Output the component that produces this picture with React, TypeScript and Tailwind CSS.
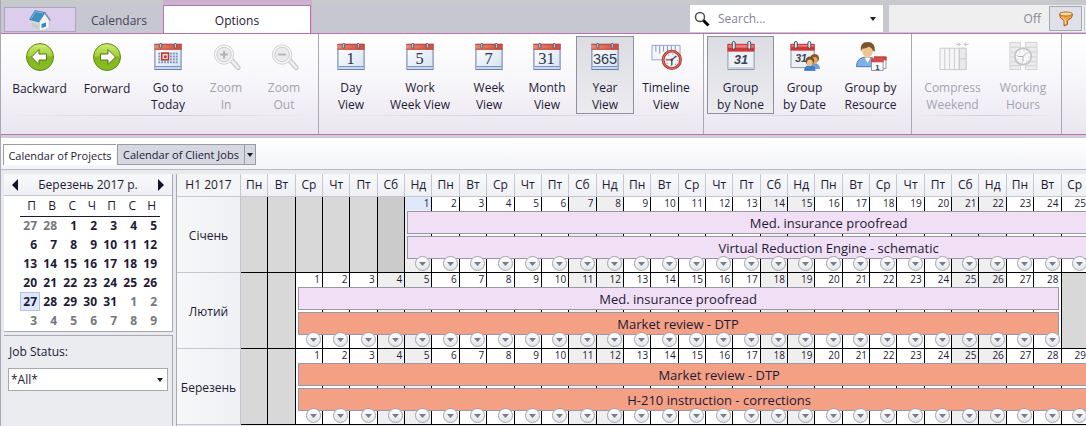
import type { ReactNode } from 'react';

const weekDays = ['Пн', 'Вт', 'Ср', 'Чт', 'Пт', 'Сб', 'Нд'];
const columns = Array.from({ length: 31 }, (_, i) => i);

const months = [
  {
    name: 'Січень',
    start: 6,
    days: 31,
    today: 1,
    jobs: [
      { title: 'Med. insurance proofread', color: 'bg-[#f1dff6]' },
      { title: 'Virtual Reduction Engine - schematic', color: 'bg-[#f1dff6]' },
    ],
  },
  {
    name: 'Лютий',
    start: 2,
    days: 28,
    today: 0,
    jobs: [
      { title: 'Med. insurance proofread', color: 'bg-[#f1dff6]' },
      { title: 'Market review - DTP', color: 'bg-[#f4a085]' },
    ],
  },
  {
    name: 'Березень',
    start: 2,
    days: 31,
    today: 0,
    jobs: [
      { title: 'Market review - DTP', color: 'bg-[#f4a085]' },
      { title: 'H-210 instruction - corrections', color: 'bg-[#f4a085]' },
    ],
  },
];

const pickerWeeks = [
  [27, 28, 1, 2, 3, 4, 5],
  [6, 7, 8, 9, 10, 11, 12],
  [13, 14, 15, 16, 17, 18, 19],
  [20, 21, 22, 23, 24, 25, 26],
  [27, 28, 29, 30, 31, 1, 2],
  [3, 4, 5, 6, 7, 8, 9],
];

function isOtherMonth(week: number, day: number) {
  return (week === 0 && day > 20) || (week >= 4 && day < 20);
}

/* ---------- icons ---------- */

function ArrowIcon({ flip = false }: { flip?: boolean }) {
  return (
    <svg viewBox="0 0 32 32" className={flip ? 'size-8 -scale-x-100' : 'size-8'}>
      <defs>
        <linearGradient id="green" x1="0" y1="0" x2="0" y2="1">
          <stop offset="0" stopColor="#cdea72" />
          <stop offset="0.45" stopColor="#a3d13a" />
          <stop offset="0.5" stopColor="#86b820" />
          <stop offset="1" stopColor="#86bd22" />
        </linearGradient>
      </defs>
      <circle cx="16" cy="17" r="13.5" fill="url(#green)" stroke="#5d8a17" />
      <path d="M7.5 17 15 9.5V14h7.500v6H15v4.500z" fill="#fff" stroke="#55721f" strokeWidth="1" />
    </svg>
  );
}

function CalendarFrame({ children }: { children?: ReactNode }) {
  return (
    <svg viewBox="0 0 32 32" className="size-8">
      <defs>
        <linearGradient id="page" x1="0" y1="0" x2="1" y2="1">
          <stop offset="0" stopColor="#ffffff" />
          <stop offset="1" stopColor="#d6e2ef" />
        </linearGradient>
        <linearGradient id="head" x1="0" y1="0" x2="1" y2="0">
          <stop offset="0" stopColor="#e88a72" />
          <stop offset="1" stopColor="#d14a3a" />
        </linearGradient>
      </defs>
      <rect x="2.500" y="4.500" width="27" height="26" fill="url(#page)" stroke="#6474a8" />
      <rect x="3" y="27" width="26" height="1" fill="#6d83b8" />
      <rect x="3" y="28" width="26" height="2" fill="#c2d9ee" />
      <rect x="2" y="4" width="28" height="6" fill="url(#head)" />
      <rect x="2" y="4" width="28" height="1" fill="#b9463a" />
      <rect x="2" y="9" width="28" height="1" fill="#c4493c" />
      {[8, 23].map((x) => (
        <rect key={x} x={x - 0.5} y="3.500" width="2" height="5" rx="1" fill="#e7eaf0" stroke="#4b5268" />
      ))}
      {children}
    </svg>
  );
}

function NumberCalendar({ value }: { value: string }) {
  return (
    <CalendarFrame>
      {value.length === 3 ? (
        <text x="16" y="25" textAnchor="middle" fontFamily="Liberation Sans" fontSize="15" fill="#333a52">{value}</text>
      ) : (
        <text x="15.500" y="25" textAnchor="middle" fontFamily="Liberation Serif" fontSize="17" fill="#2c3248">{value}</text>
      )}
    </CalendarFrame>
  );
}

function TodayIcon() {
  return (
    <CalendarFrame>
      {[13, 16, 19, 22].map((y) =>
        [6, 9, 12, 15, 18, 21, 24].map((x) => <rect key={`${x}-${y}`} x={x} y={y} width="2" height="2" fill="#7f93c4" />)
      )}
      <rect x="9.500" y="13.500" width="7" height="7" fill="#f6d5cd" stroke="#b6352c" strokeWidth="1.500" />
      <rect x="12" y="16" width="2.500" height="2.500" fill="#b6352c" />
    </CalendarFrame>
  );
}

function ZoomIcon({ plus = false }: { plus?: boolean }) {
  return (
    <svg viewBox="0 0 32 32" className="size-8">
      <path d="m21 20 7.500 8.500" stroke="#c3c3c6" strokeWidth="5" strokeLinecap="round" />
      <path d="m21 20 7.500 8.500" stroke="#efeff1" strokeWidth="3" strokeLinecap="round" />
      <circle cx="14" cy="15" r="10" fill="#f7f7f8" stroke="#cfcfd2" />
      <circle cx="14" cy="15" r="7.500" fill="#ebebed" stroke="#cacacd" />
      <path d={plus ? 'M10 15h8M14 11v8' : 'M10 15h8'} stroke="#b3b3b6" strokeWidth="2" />
    </svg>
  );
}

function TimelineIcon() {
  return (
    <svg viewBox="0 0 32 32" className="size-8">
      <path d="M1.500 5.500h29v15h-29z" fill="#f3f7fc" stroke="#8ea3c8" />
      <path d="M5.500 6v6M9.500 6v8M13.500 6v6M17.500 6v8M21.500 6v6M25.500 6v6" stroke="#8291b8" />
      <circle cx="22" cy="20.500" r="9" fill="#eef4fa" stroke="#b9352d" strokeWidth="3" />
      <circle cx="22" cy="20.500" r="9" fill="none" stroke="#e4796c" strokeWidth="1" />
      <circle cx="22" cy="20.500" r="6" fill="none" stroke="#66708c" strokeWidth="1" strokeDasharray="1 3.700" />
      <path d="m22 20.500 4.500-4M22 20.500V26" stroke="#39415c" strokeWidth="1.300" />
      <path d="M16 20.500h6" stroke="#c23b33" strokeWidth="1.300" />
      <circle cx="22" cy="20.500" r="1.300" fill="#39415c" />
    </svg>
  );
}

function RedCalendar() {
  return (
    <svg viewBox="0 0 32 32" className="size-8">
      <path d="M2.500 4.500h27v26h-27z" fill="#edf1f6" stroke="#8993a8" />
      <path d="M3 28h26v2H3z" fill="#c5d0de" />
      <path d="M2 4h28v8H2z" fill="#cf3636" />
      <path d="M3 5h26v3H3z" fill="#ec7a76" />
      {[8, 24].map((x) => (
        <rect key={x} x={x - 1} y="1.500" width="3" height="8" rx="1.500" fill="#e5e8ee" stroke="#454a5a" />
      ))}
      <text x="16" y="25" textAnchor="middle" fontFamily="Liberation Sans" fontSize="13" fontWeight="bold" fontStyle="italic" fill="#3c4356">31</text>
    </svg>
  );
}

function GroupDateIcon() {
  return (
    <svg viewBox="0 0 32 32" className="size-8">
      <path d="M1.500 4.500h24v24h-24z" fill="#edf1f6" stroke="#8993a8" />
      <path d="M1 4h25v7H1z" fill="#cf3636" />
      <path d="M2 5h23v2H2z" fill="#ec7a76" />
      {[6, 20].map((x) => (
        <rect key={x} x={x - 1} y="1.500" width="3" height="7" rx="1.500" fill="#e5e8ee" stroke="#454a5a" />
      ))}
      <text x="12" y="23" textAnchor="middle" fontFamily="Liberation Sans" fontSize="11" fontWeight="bold" fontStyle="italic" fill="#3c4356">31</text>
      <path d="M21 30q0-6 5-6t5.500 6z" fill="#6fa0dc" />
      <circle cx="26" cy="19" r="4.500" fill="#8a5a28" />
      <ellipse cx="26" cy="21" rx="3" ry="3.500" fill="#e0a868" />
      <path d="M15.500 31.500q0-5 5.500-5t5.500 5z" fill="#3f7fcf" stroke="#2c60a5" strokeWidth="0.600" />
      <circle cx="21" cy="21.500" r="4.500" fill="#7b4f22" />
      <ellipse cx="21" cy="23.500" rx="3" ry="3.500" fill="#eec08a" />
    </svg>
  );
}

function GroupResourceIcon() {
  return (
    <svg viewBox="0 0 32 32" className="size-8">
      <path d="M1 27.500q0-10 11-10t11 10z" fill="#7fb0e8" stroke="#4577b8" />
      <path d="m9.500 18 3 6 3-6z" fill="#fff" />
      <ellipse cx="12.500" cy="11" rx="5.500" ry="7" fill="#f1c592" />
      <path d="M5.500 12Q4 2 12.500 2t7.500 10l-2-1q-1-3-4-4-4 2-7 2z" fill="#80542a" />
      <path d="M19.500 17.500h12v12h-12z" fill="#fff" stroke="#8a93a8" />
      <path d="M19 17h13v4H19z" fill="#d23b39" />
      <path d="M16.500 19.500h12v12h-12z" fill="#f8fafc" stroke="#8a93a8" />
      <path d="M16 19h13v4H16z" fill="#d94a45" />
      <text x="22.500" y="30.500" textAnchor="middle" fontFamily="Liberation Sans" fontSize="8" fontWeight="bold" fill="#39415c">1</text>
    </svg>
  );
}

function CompressIcon() {
  return (
    <svg viewBox="0 0 32 32" className="size-8" fill="none" stroke="#cacacd">
      <path d="M19 4.500h4m-1.500-2 2 2-2 2M32 4.500h-4m1.500-2-2 2 2 2" stroke="#bdbdc1" />
      <path d="M2.500 8.500h27v22h-27z" fill="#f6f6f7" />
      <path d="M22.500 8.500h7v22h-7z" fill="#e9e9eb" />
      <path d="M7.500 9v21M12.500 9v21M17.500 9v21M22.500 9v21M22.500 19.500h7" />
    </svg>
  );
}

function WorkingHoursIcon() {
  return (
    <svg viewBox="0 0 32 32" className="size-8" fill="none" stroke="#d3d3d6">
      <path d="M2.500 2.500h11v28h-11zM18.500 2.500h12v28h-12z" fill="#ececee" />
      <path d="M3 7.500h10M3 12.500h10M3 17.500h10M3 22.500h10M3 26.500h10M19 7.500h11M19 12.500h11M19 17.500h11M19 22.500h11M19 26.500h11" />
      <circle cx="16" cy="17" r="8.500" fill="#f7f7f8" stroke="#c6c6c9" strokeWidth="2" />
      <circle cx="16" cy="17" r="6" strokeDasharray="1 3.700" stroke="#b5b5b9" />
      <path d="m16 17 4-4M16 17v5M11 17h5" stroke="#aeaeb2" />
    </svg>
  );
}

function HouseIcon() {
  return (
    <svg viewBox="0 0 22 22" className="size-[22px]">
      <path d="m9 12 7-8 4 7v8l-9 3z" fill="#f4f4f4" stroke="#b9bcc0" strokeWidth="0.500" />
      <path d="M2 11v7l9 4v-9z" fill="#d3d5d8" />
      <path d="M4 14v4M6 15v4M8 16v4" stroke="#b4b6ba" strokeWidth="0.700" />
      <path d="M.5 10.500 6 1.500l10 2-6 9.500z" fill="#3f8fc0" stroke="#2f759f" strokeWidth="0.600" />
      <path d="m2 10 4.500-7.500L14 4" fill="none" stroke="#79bcdf" strokeWidth="1" />
      <path d="m15.500 3.500 6 8" stroke="#6c93ad" strokeWidth="1.500" />
      <path d="M12.500 15 17 13.500v4L12.500 19z" fill="#2f86b8" />
    </svg>
  );
}

function FunnelIcon() {
  return (
    <svg viewBox="0 0 16 16" className="size-4">
      <path d="M1.500 3.500q0 4 4.500 6v5.500l3.500-1.500v-4q5-2 5-6z" fill="#f0a340" stroke="#a8632a" />
      <ellipse cx="8" cy="3" rx="6.500" ry="2" fill="#fbd79b" stroke="#b06a2c" />
      <path d="M4.500 6.500q1 2 2.800 2.500V13" fill="none" stroke="#fde3b3" />
    </svg>
  );
}

function SearchIcon() {
  return (
    <svg viewBox="0 0 16 16" className="size-4">
      <circle cx="6" cy="6" r="4.500" fill="#fff" stroke="#4d4d4d" strokeWidth="1.500" />
      <path d="m9.500 9.500 5 5" stroke="#000" strokeWidth="3" />
    </svg>
  );
}

function Caret() {
  return (
    <svg viewBox="0 0 6 4" className="h-1 w-1.5" fill="#1c1a30">
      <path d="M0 0h6L3 4z" />
    </svg>
  );
}

/* ---------- ribbon ---------- */

type Tool = { lines: string[]; icon: ReactNode; width: string; active?: boolean; disabled?: boolean };

const ribbon: Tool[][] = [
  [
    { lines: ['Backward'], icon: <ArrowIcon />, width: 'w-[71px]' },
    { lines: ['Forward'], icon: <ArrowIcon flip />, width: 'w-16' },
    { lines: ['Go to', 'Today'], icon: <TodayIcon />, width: 'w-[58px]' },
    { lines: ['Zoom', 'In'], icon: <ZoomIcon plus />, width: 'w-[58px]', disabled: true },
    { lines: ['Zoom', 'Out'], icon: <ZoomIcon />, width: 'w-[58px]', disabled: true },
  ],
  [
    { lines: ['Day', 'View'], icon: <NumberCalendar value="1" />, width: 'w-[58px]' },
    { lines: ['Work', 'Week View'], icon: <NumberCalendar value="5" />, width: 'w-20' },
    { lines: ['Week', 'View'], icon: <NumberCalendar value="7" />, width: 'w-[58px]' },
    { lines: ['Month', 'View'], icon: <NumberCalendar value="31" />, width: 'w-[58px]' },
    { lines: ['Year', 'View'], icon: <NumberCalendar value="365" />, width: 'w-[58px]', active: true },
    { lines: ['Timeline', 'View'], icon: <TimelineIcon />, width: 'w-16' },
  ],
  [
    { lines: ['Group', 'by None'], icon: <RedCalendar />, width: 'w-[67px]', active: true },
    { lines: ['Group', 'by Date'], icon: <GroupDateIcon />, width: 'w-[61px]' },
    { lines: ['Group by', 'Resource'], icon: <GroupResourceIcon />, width: 'w-[71px]' },
  ],
  [
    { lines: ['Compress', 'Weekend'], icon: <CompressIcon />, width: 'w-[75px]', disabled: true },
    { lines: ['Working', 'Hours'], icon: <WorkingHoursIcon />, width: 'w-[66px]', disabled: true },
  ],
];

function Ribbon() {
  return (
    <div className="flex h-[102px] border-y border-[#bd6fb8] bg-linear-to-b from-white via-[#f6f5f9] to-[#eae6ef]">
      {ribbon.map((group, i) => (
        <div key={i} className="flex shrink-0 flex-col border-r border-[#a9a9b4] pt-0.5 pr-[5px] pl-[3px]">
          <div className="flex">
            {group.map((tool) => (
              <button
                key={tool.lines.join(' ')}
                type="button"
                disabled={tool.disabled}
                className={`flex h-[78px] shrink-0 flex-col items-center border pt-[3px] leading-[17px] whitespace-nowrap ${tool.width} ${
                  tool.active ? 'border-[#8e8f9f] bg-linear-to-b from-[#dcdde2] to-[#ececf0]' : 'border-transparent'
                } ${tool.disabled ? 'text-[#a3a3b0]' : 'text-[#1e1a35]'}`}
              >
                {tool.icon}
                <span className="mt-2">
                  {tool.lines.map((line) => (
                    <span key={line} className="block">{line}</span>
                  ))}
                </span>
              </button>
            ))}
          </div>
          <div className="mt-px h-px bg-linear-to-r from-transparent via-[#cfced6] to-transparent"></div>
        </div>
      ))}
    </div>
  );
}

function TopBar() {
  return (
    <div className="flex h-[33px] items-end border-t-4 border-[#c8c9cb] bg-[#c7c7d1]">
      <button type="button" aria-label="Home" className="mb-px ml-[3px] flex h-[25px] w-[72px] items-end justify-center border border-[#a9a9b6] bg-[#dccdec]">
        <HouseIcon />
      </button>
      <button type="button" className="h-[25px] w-[86px] text-[#45435a]">Calendars</button>
      <div className="-mt-1 ml-px h-[33px] w-[149px] bg-[#cbb3d0] pt-[5px] pr-px">
        <button type="button" className="-mb-px block h-[29px] w-full border border-b-0 border-[#bd6fb8] bg-white pt-0.5 text-[#1e1a35]">Options</button>
      </div>
      <label className="mb-px ml-auto flex h-[27px] w-[193px] items-center bg-white pr-[7px] pl-1">
        <SearchIcon />
        <input type="text" aria-label="Search" placeholder="Search..." className="ml-2 min-w-0 flex-1 outline-none placeholder:text-[#858592]" />
        <Caret />
      </label>
      <div className="mb-px ml-1.5 flex h-[27px] w-[197px] items-center bg-[#efefef]">
        <span className="ml-auto text-[#858592]">Off</span>
        <button type="button" aria-label="Filter" className="ml-2 flex h-[25px] w-[33px] items-center justify-center border border-[#a6a6b4] bg-[#e0e0ea]">
          <FunnelIcon />
        </button>
        <div className="ml-0.5 h-[25px] w-0.5 border-l border-[#c3c3cc]"></div>
      </div>
    </div>
  );
}

/* ---------- side panel ---------- */

function DatePicker() {
  return (
    <div className="h-[158px] border-r border-b border-[#a9a9b6] bg-white">
      <div className="flex h-[22px] items-center justify-between border-b border-[#c6c6d2] bg-linear-to-b from-[#f8f9fb] to-[#eff0f4] px-2">
        <button type="button" aria-label="Previous month">
          <svg viewBox="0 0 6 12" className="h-3 w-1.5" fill="#14122a"><path d="M6 0v12L0 6z" /></svg>
        </button>
        <span>Березень 2017 р.</span>
        <button type="button" aria-label="Next month">
          <svg viewBox="0 0 6 12" className="h-3 w-1.5" fill="#14122a"><path d="M0 0v12l6-6z" /></svg>
        </button>
      </div>
      <table className="ml-4 table-fixed border-collapse text-right">
        <thead>
          <tr className="h-5">
            {['П', 'В', 'С', 'Ч', 'П', 'С', 'Н'].map((day, i) => (
              <th key={i} className="w-5 border-b border-[#1e1a35] p-0 pr-1 font-normal">{day}</th>
            ))}
          </tr>
        </thead>
        <tbody>
          {pickerWeeks.map((week, w) => (
            <tr key={w} className="h-[19px]">
              {week.map((day) => (
                <td
                  key={day}
                  className={`w-5 p-0 pr-[3px] font-bold leading-[18px] ${isOtherMonth(w, day) ? 'text-[#77777b]' : ''} ${
                    w === 4 && day === 27 ? 'bg-[#dfe8fb] outline -outline-offset-1 outline-[#b3c3e6]' : ''
                  }`}
                >
                  {day}
                </td>
              ))}
            </tr>
          ))}
        </tbody>
      </table>
    </div>
  );
}

function SidePanel() {
  return (
    <aside className="flex w-[169px] shrink-0 flex-col gap-[3px]">
      <DatePicker />
      <div className="flex-1 border-t border-r border-[#a9a9b6] bg-[#ebecf0] px-1 pt-1.5">
        <label htmlFor="job-status" className="block pl-px leading-5">Job Status:</label>
        <div className="relative mt-1.5">
          <select id="job-status" className="h-[23px] w-full appearance-none border border-[#a9a9b6] bg-white px-0.5">
            <option>*All*</option>
          </select>
          <span className="pointer-events-none absolute top-[10px] right-[5px]"><Caret /></span>
        </div>
      </div>
    </aside>
  );
}

/* ---------- scheduler ---------- */

const grid = 'grid w-[1012px] shrink-0 grid-cols-[repeat(37,minmax(0,1fr))]';

function DropButton() {
  return (
    <button type="button" aria-label="More" className="relative z-10 mr-px mb-px flex size-[15px] shrink-0 items-center justify-center rounded-full border border-[#a3a4ad] bg-linear-to-b from-white to-[#e4e5ea]">
      <svg viewBox="0 0 7 4" className="h-1 w-[7px]" fill="#797a8c"><path d="M0 0h7L3.500 4z" /></svg>
    </button>
  );
}

function dayColor(weekday: number, inMonth: boolean) {
  if (inMonth) return weekday > 4 ? 'bg-[#efefef]' : 'bg-white';
  return weekday > 4 ? 'bg-[#cbcbcb]' : 'bg-[#d8d8d8]';
}

function Scheduler() {
  return (
    <main className="min-w-0 flex-1 overflow-hidden border-l border-[#a9a9b6]">
      <div className="flex h-[23px] text-center leading-[22px]">
        <div className="w-16 shrink-0 border-r border-b border-[#c6c6d2] bg-[#f4f5f7]">H1 2017</div>
        <div className={grid}>
          {columns.map((c) => (
            <div key={c} className="border-r border-b border-[#c6c6d2] bg-linear-to-b from-[#f8f9fb] to-[#eff0f4]">{weekDays[c % 7]}</div>
          ))}
        </div>
      </div>
      {months.map((month) => (
        <div key={month.name} className="flex h-[76px]">
          <div className="flex w-16 shrink-0 items-center justify-center border-r border-b border-[#c6c6d2] bg-linear-to-r from-[#f6f7f9] to-[#eff0f3] pt-0.5">{month.name}</div>
          <div className={`${grid} grid-rows-[14px_23px_2px_23px_14px]`}>
            {columns.map((c) => {
              const day = c - month.start + 1;
              const inMonth = day > 0 && day <= month.days;
              return (
                <div
                  key={c}
                  className={`row-start-1 row-end-[-1] flex flex-col items-end justify-between border-r border-b border-black ${dayColor(c % 7, inMonth)}`}
                  style={{ gridColumn: c + 1 }}
                >
                  {inMonth && (
                    <>
                      <span className={`w-full pr-0.5 text-right text-[10px] leading-[13px] ${day === month.today ? 'bg-[#dfe8fb]' : ''}`}>{day}</span>
                      <DropButton />
                    </>
                  )}
                </div>
              );
            })}
            {month.jobs.map((job, row) => (
              <div
                key={job.title}
                className={`mr-[3px] ml-0.5 border border-[#9a98a8] text-center text-[13px] leading-[22px] ${job.color}`}
                style={{ gridColumn: `${month.start + 1} / span ${month.days}`, gridRow: row * 2 + 2 }}
              >
                {job.title}
              </div>
            ))}
          </div>
        </div>
      ))}
    </main>
  );
}

export default function App() {
  return (
    <div className="flex min-h-screen flex-col overflow-hidden border-l border-[#a9a9b6] bg-[#e9eaee] font-['Open_Sans','Noto_Sans',sans-serif] text-[12px] text-[#1e1a35]">
      <TopBar />
      <Ribbon />
      <div className="mb-1 flex h-[35px] items-center border-t-[3px] border-b border-t-[#cdced6] border-b-[#b9bac6] bg-linear-to-b from-white to-[#f3f4f7] px-0.5 pt-0.5 text-[11px]">
        <button type="button" className="h-[21px] w-[113px] border-t border-l border-[#9b9ba3] bg-white leading-[19px]">Calendar of Projects</button>
        <div className="ml-px flex h-[21px] border border-[#9b9ba6] bg-[#d5d7e1]">
          <button type="button" className="w-[126px] leading-[19px]">Calendar of Client Jobs</button>
          <button type="button" aria-label="Choose calendar" className="flex w-[11px] items-center justify-center border-l border-[#9b9ba6]"><Caret /></button>
        </div>
      </div>
      <div className="flex flex-1 gap-[3px] pl-[3px]">
        <SidePanel />
        <Scheduler />
      </div>
    </div>
  );
}
